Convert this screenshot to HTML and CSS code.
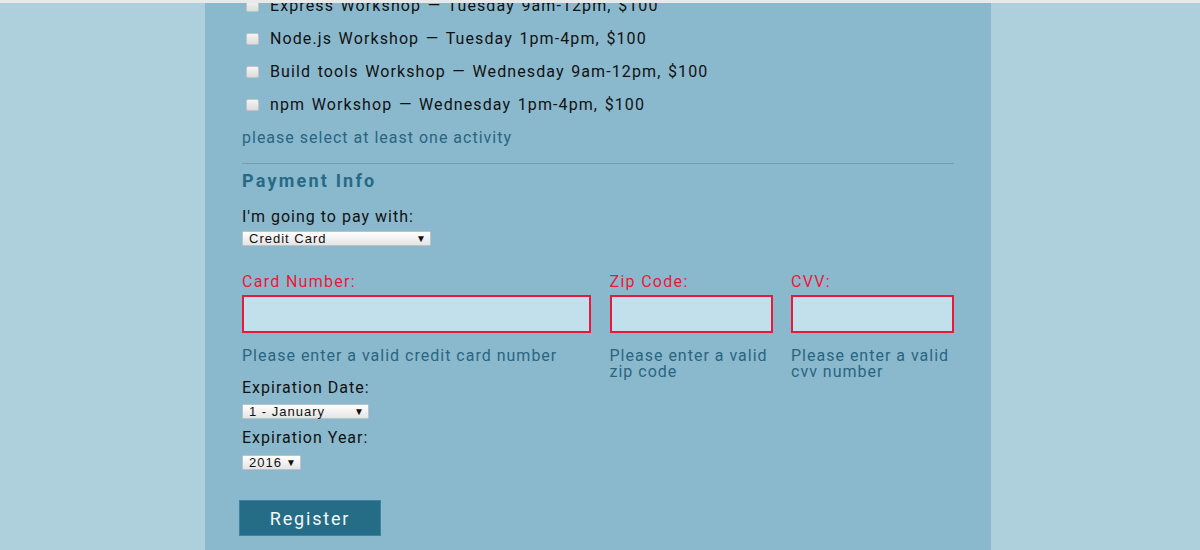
FILE: index.html
```html
<!DOCTYPE html>
<html lang="en">
<head>
<meta charset="utf-8">
<title>Register</title>
<link rel="stylesheet" href="styles.css">
</head>
<body>
<div class="topstrip"></div>
<main class="container">
  <div class="activities">
    <label class="activity"><span class="checkbox"></span>Express Workshop — Tuesday 9am-12pm, $100</label>
    <label class="activity"><span class="checkbox"></span>Node.js Workshop — Tuesday 1pm-4pm, $100</label>
    <label class="activity"><span class="checkbox"></span>Build tools Workshop — Wednesday 9am-12pm, $100</label>
    <label class="activity"><span class="checkbox"></span>npm Workshop — Wednesday 1pm-4pm, $100</label>
  </div>
  <p class="hint activity-error">please select at least one activity</p>
  <hr class="divider">
  <h2 class="section-title">Payment Info</h2>
  <p class="label pay-label">I'm going to pay with:</p>
  <div class="select select-pay"><span class="select-text">Credit Card</span><span class="arrow">▼</span></div>

  <div class="card-grid">
    <div class="field">
      <p class="label error-label">Card Number:</p>
      <div class="input"></div>
      <p class="hint help">Please enter a valid credit card number</p>
    </div>
    <div class="field">
      <p class="label error-label">Zip Code:</p>
      <div class="input"></div>
      <p class="hint help">Please enter a valid zip code</p>
    </div>
    <div class="field">
      <p class="label error-label">CVV:</p>
      <div class="input"></div>
      <p class="hint help">Please enter a valid cvv number</p>
    </div>
  </div>

  <p class="label exp-label">Expiration Date:</p>
  <div class="select select-month"><span class="select-text">1 - January</span><span class="arrow">▼</span></div>
  <p class="label year-label">Expiration Year:</p>
  <div class="select select-year"><span class="select-text">2016</span><span class="arrow">▼</span></div>

  <button class="register" type="button">Register</button>
</main>
</body>
</html>
```
FILE: styles.css
```css
html, body {
  margin: 0;
  padding: 0;
}
body {
  background: #aecfdc;
  font-family: Roboto, "Liberation Sans", sans-serif;
  height: 550px;
  overflow: hidden;
}
.topstrip {
  height: 3px;
  background: #e9e9e9;
}
.container {
  width: 712px;
  margin: 0 209px 0 205px;
  padding: 0 37px;
  background: #8ab9ce;
  height: 547px;
  overflow: hidden;
}
.activities {
  margin-top: -14px;
}
.activity {
  display: flex;
  align-items: center;
  height: 33px;
  font-size: 16px;
  letter-spacing: 1.1px;
  word-spacing: 1.5px;
  color: #111;
  white-space: nowrap;
}
.checkbox {
  flex: none;
  width: 11px;
  height: 10px;
  margin: 0 11px 0 4px;
  border: 1px solid #c4c4c4;
  border-radius: 2px;
  background: linear-gradient(#f4f4f4, #dcdcdc);
}
p { margin: 0; }
.hint {
  color: #2a6580;
  font-size: 16px;
  letter-spacing: 1px;
}
.activity-error {
  margin-top: 7px;
  line-height: 20px;
}
.divider {
  margin: 15px 0 0;
  border: 0;
  border-top: 1px solid #6aa0b6;
  height: 0;
}
.section-title {
  margin: 6px 0 0;
  font-size: 18px;
  line-height: 22px;
  font-weight: 700;
  letter-spacing: 2.2px;
  color: #266a85;
}
.label {
  font-size: 16px;
  letter-spacing: 1px;
  color: #111;
  line-height: 16px;
}
.pay-label {
  margin-top: 17px;
}
.select {
  display: flex;
  align-items: center;
  justify-content: space-between;
  box-sizing: border-box;
  height: 15px;
  padding: 0 4px 0 6px;
  border: 1px solid #b8c4c8;
  border-radius: 1px;
  background: linear-gradient(#ffffff, #e4e4e4);
  font-family: "Liberation Sans", Arial, sans-serif;
  font-size: 13px;
  letter-spacing: 1px;
  color: #111;
}
.select-text {
  line-height: 13px;
}
.arrow {
  font-size: 10px;
  line-height: 13px;
  letter-spacing: 0;
}
.select-pay {
  margin-top: 6px;
  width: 189px;
}
.card-grid {
  display: grid;
  grid-template-columns: 349px 163px 163px;
  column-gap: 18.5px;
  margin-top: 25px;
}
.error-label {
  color: #ec1838;
  line-height: 20px;
  padding-top: 1px;
  letter-spacing: 1.3px;
}
.input {
  margin-top: 3px;
  box-sizing: border-box;
  height: 38px;
  border: 2px solid #ec1838;
  background: #c2e0ec;
}
.help {
  margin-top: 15px;
  line-height: 16px;
}
.exp-label {
  margin-top: 0;
}
.select-month {
  margin-top: 8px;
  width: 127px;
}
.year-label {
  margin-top: 11px;
}
.select-year {
  margin-top: 9px;
  width: 59px;
}
.register {
  display: block;
  margin: 30px 0 0 -3px;
  width: 142px;
  height: 36px;
  padding: 0;
  border: 1px solid #3a84a2;
  background: #256d86;
  color: #f4f8fa;
  font-family: Roboto, "Liberation Sans", sans-serif;
  font-size: 18px;
  letter-spacing: 1.8px;
}
```
